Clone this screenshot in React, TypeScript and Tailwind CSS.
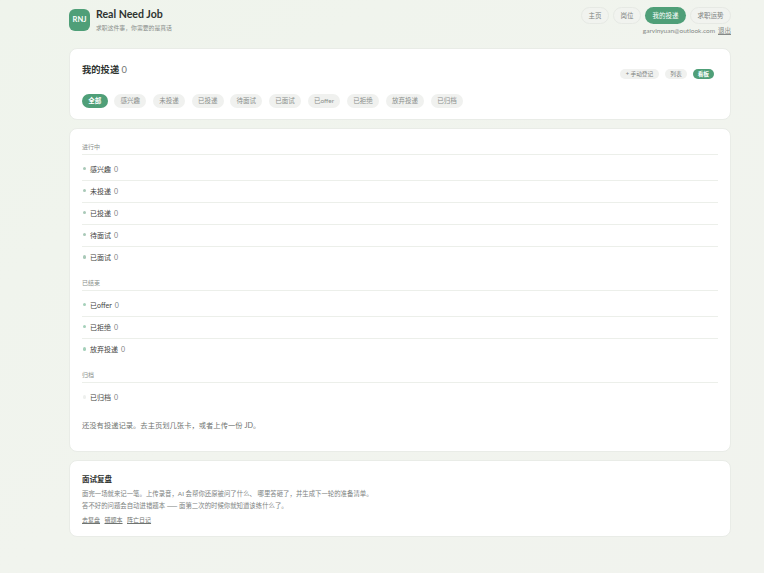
import React from 'react'

const filters = ['全部', '感兴趣', '未投递', '已投递', '待面试', '已面试', '已offer', '已拒绝', '放弃投递', '已归档']

const groups = [
  { label: '进行中', items: ['感兴趣', '未投递', '已投递', '待面试', '已面试'], dot: 'bg-[#a9c9b8]' },
  { label: '已结束', items: ['已offer', '已拒绝', '放弃投递'], dot: 'bg-[#a5d0ba]' },
  { label: '归档', items: ['已归档'], dot: 'bg-[#eef0ee]' },
]

const navItems = ['主页', '岗位', '我的投递', '求职运势']

export default function App() {
  return (
    <div className="min-h-[573px] bg-gradient-to-br from-[#eff4ec] via-[#f1f4ee] to-[#f1f3ee] font-['Lato','Noto_Sans_CJK_SC',sans-serif] text-[#3a3f3c]">
      <div className="ml-[69px] w-[662px] pb-[36px]">
        <header className="flex h-[48px] items-start justify-between">
          <div className="flex items-center gap-[6px] pt-[8px]">
            <div className="flex h-[22px] w-[21px] items-center justify-center rounded-[6px] bg-[#4f9f78] text-[7.5px] font-bold text-white">RNJ</div>
            <div>
              <div className="text-[10.6px] leading-[13px] font-bold text-[#2e3330]">Real Need Job</div>
              <div className="mt-[2px] text-[5.85px] leading-[9px] text-[#8a8f8c]">求职这件事，你需要的是真话</div>
            </div>
          </div>
          <div className="flex flex-col items-end pt-[7px]">
            <nav className="flex items-center gap-[4px]">
              {navItems.map(item => (
                <span
                  key={item}
                  className={
                    item === '我的投递'
                      ? 'flex h-[17px] items-center rounded-full bg-[#4f9f78] px-[7.5px] text-[6.5px] text-white'
                      : 'flex h-[17px] items-center rounded-full border border-[#e6e9e4] bg-[#f1f3ef] px-[6.5px] text-[6.5px] text-[#7d827f]'
                  }
                >
                  {item}
                </span>
              ))}
            </nav>
            <div className="mt-[2px] flex items-center gap-[3px] text-[6.5px] leading-[9px] text-[#858a87]">
              <span>garvinyuan@outlook.com</span>
              <span className="underline">退出</span>
            </div>
          </div>
        </header>

        <section className="h-[72px] rounded-[8px] border border-[#e9ece7] bg-white px-[12px] pt-[14px]">
          <div className="flex items-start justify-between">
            <h1 className="text-[9.3px] leading-[13px] font-bold text-[#2e3330]">
              我的投递 <span className="font-normal text-[#6f7471]">0</span>
            </h1>
            <div className="mt-[6px] flex items-center gap-[6px] pr-[4px] text-[5.7px] text-[#7d827f]">
              <span className="flex h-[10px] items-center rounded-full bg-[#f0f1ef] px-[6px]">+ 手动登记</span>
              <span className="flex h-[10px] items-center rounded-full bg-[#f0f1ef] px-[5px]">列表</span>
              <span className="flex h-[10px] items-center rounded-full bg-[#4f9f78] px-[5px] font-bold text-white">看板</span>
            </div>
          </div>
          <div className="mt-[15px] flex gap-[6.5px]">
            {filters.map(f => (
              <span
                key={f}
                className={
                  f === '全部'
                    ? 'flex h-[13.5px] items-center rounded-full bg-[#4f9f78] px-[6.35px] text-[6.5px] font-bold text-white'
                    : 'flex h-[13.5px] items-center rounded-full bg-[#f0f1ef] px-[6.35px] text-[6.5px] text-[#8a8f8c]'
                }
              >
                {f}
              </span>
            ))}
          </div>
        </section>

        <section className="mt-[8px] h-[324px] rounded-[8px] border border-[#e9ece7] bg-white px-[12px] pt-[13px]">
          {groups.map(group => (
            <div key={group.label} className="mb-[9px]">
              <div className="border-b border-[#ecefea] pb-[3px] text-[6px] leading-[9px] text-[#8a8f8c]">{group.label}</div>
              <div className="pt-[4px]">
                {group.items.map((item, i) => (
                  <div
                    key={item}
                    className={
                      i === group.items.length - 1
                        ? 'flex h-[22px] items-center pb-[2px] text-[7px] leading-[10px]'
                        : 'flex h-[22px] items-center border-b border-[#ecefea] pb-[2px] text-[7px] leading-[10px]'
                    }
                  >
                    <span className={`mr-[4px] ml-[0.5px] h-[3.5px] w-[3.5px] rounded-full ${group.dot}`} />
                    <span className="text-[#3f4441]">{item}</span>
                    <span className="ml-[3px] text-[#7d827f]">0</span>
                  </div>
                ))}
              </div>
            </div>
          ))}
          <p className="mt-[11px] text-[7.3px] leading-[12px] text-[#6f7471]">还没有投递记录。去主页划几张卡，或者上传一份 JD。</p>
        </section>

        <section className="mt-[8px] h-[77px] rounded-[8px] border border-[#e9ece7] bg-white px-[12px] pt-[13px]">
          <h2 className="text-[7.5px] leading-[12px] font-bold text-[#2e3330]">面试复盘</h2>
          <p className="mt-[2px] text-[6.4px] leading-[12px] text-[#7d827f]">
            面完一场就来记一笔。上传录音，AI 会帮你还原被问了什么、 哪里答砸了，并生成下一轮的准备清单。
            <br />
            答不好的问题会自动进错题本 <span className="font-['Noto_Sans_CJK_SC']">——</span> 面第二次的时候你就知道该练什么了。
          </p>
          <div className="mt-[3px] flex gap-[4.5px] text-[6px] leading-[10px] text-[#6f7471] underline">
            <span>去复盘</span>
            <span>错题本</span>
            <span>阵亡日记</span>
          </div>
        </section>
      </div>
    </div>
  )
}
